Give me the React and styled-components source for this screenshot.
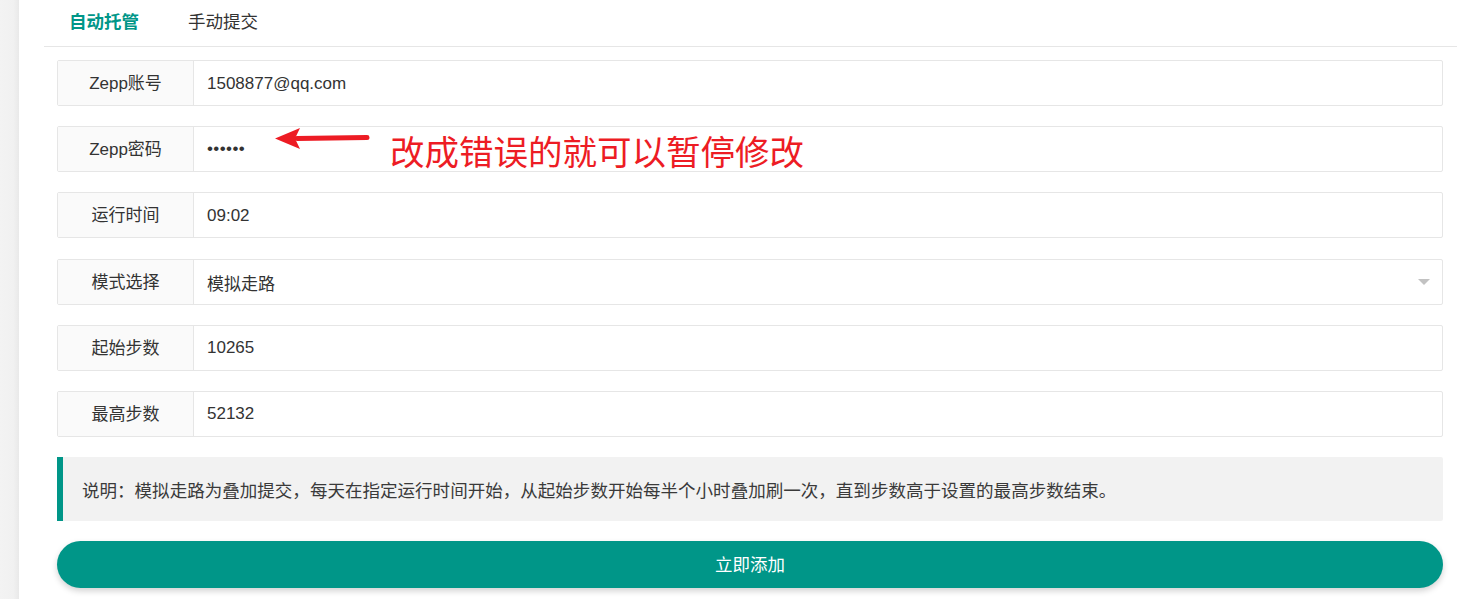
import React from "react";
import styled, { createGlobalStyle } from "styled-components";

const Global = createGlobalStyle`
  html, body {
    margin: 0;
    padding: 0;
    background: #fff;
  }
  body {
    font-family: "Liberation Sans", "Noto Sans CJK SC", sans-serif;
    color: #333;
  }
`;

const Page = styled.div`
  display: flex;
  min-height: 599px;
`;

const Side = styled.div`
  width: 19px;
  flex-shrink: 0;
  background: linear-gradient(90deg, #f3f3f3 0%, #f1f1f1 70%, #e9e9e9 100%);
`;

const Main = styled.div`
  width: 1413px;
  margin-left: 25px;
`;

const Tabs = styled.ul`
  display: flex;
  margin: 0;
  padding: 0;
  list-style: none;
  height: 46px;
  border-bottom: 1px solid #e6e6e6;
`;

const Tab = styled.li`
  padding: 0 25px 0 ${(p) => (p.$first ? "25px" : "24px")};
  line-height: 41px;
  font-size: 17.5px;
  font-family: "Noto Sans CJK SC", sans-serif;
  font-weight: ${(p) => (p.$active ? 700 : 400)};
  color: ${(p) => (p.$active ? "#009688" : "#333")};
`;

const Form = styled.div`
  padding: 13px 14px 0 13px;
  display: flex;
  flex-direction: column;
  gap: 20.2px;
`;

const Row = styled.div`
  position: relative;
  display: flex;
  height: 46px;
  border: 1px solid #e6e6e6;
  border-radius: 2px;
  box-sizing: border-box;
  font-size: 17px;
`;

const Label = styled.div`
  width: 136px;
  flex-shrink: 0;
  display: flex;
  align-items: center;
  justify-content: center;
  padding-bottom: 3px;
  box-sizing: border-box;
  background: #fafafa;
  border-right: 1px solid #e6e6e6;
  color: #333;
`;

const Value = styled.div`
  flex: 1;
  display: flex;
  align-items: center;
  padding-left: 13px;
  padding-top: ${(p) => (p.$dots ? "0" : "1px")};
  color: #333;
  letter-spacing: ${(p) => (p.$dots ? "0.4px" : "0")};
`;

const Caret = styled.span`
  position: absolute;
  right: 12px;
  top: 19px;
  width: 0;
  height: 0;
  border-left: 6px solid transparent;
  border-right: 6px solid transparent;
  border-top: 6px solid #c2c2c2;
`;

const Note = styled.div`
  display: flex;
  align-items: center;
  height: 64px;
  padding-left: 19px;
  background: #f2f2f2;
  border-left: 6px solid #009688;
  border-radius: 0 2px 2px 0;
  font-size: 17.55px;
  font-family: "Noto Sans CJK SC", sans-serif;
  color: #3a3a3a;
`;

const Submit = styled.button`
  height: 47px;
  padding: 0 0 3px;
  border: 0;
  border-radius: 24px;
  background: #009688;
  color: #fff;
  font-family: "Noto Sans CJK SC", sans-serif;
  font-size: 17.5px;
  box-shadow: 0 3px 6px rgba(0, 0, 0, 0.18);
  cursor: pointer;
`;

const Annotation = styled.div`
  position: absolute;
  left: 217px;
  top: 0;
  display: flex;
  align-items: flex-start;
  gap: 19px;
  pointer-events: none;
`;

const AnnoText = styled.span`
  font-family: "Noto Sans CJK SC", sans-serif;
  font-size: 34.5px;
  color: #ed1c24;
  line-height: 46px;
`;

const Arrow = () => (
  <svg width="96" height="24" viewBox="0 0 96 24">
    <path d="M22 11.5 L92 10.5" stroke="#ed1c24" strokeWidth="5" strokeLinecap="round" />
    <path d="M0 11.5 L25 1 L20 11.5 L25 22 Z" fill="#ed1c24" />
  </svg>
);

const fields = [
  { label: "Zepp账号", value: "1508877@qq.com" },
  { label: "Zepp密码", value: "••••••", dots: true, note: true },
  { label: "运行时间", value: "09:02" },
  { label: "模式选择", value: "模拟走路", select: true },
  { label: "起始步数", value: "10265" },
  { label: "最高步数", value: "52132" },
];

export default function App() {
  return (
    <Page>
      <Global />
      <Side />
      <Main>
        <Tabs>
          <Tab $first $active>自动托管</Tab>
          <Tab>手动提交</Tab>
        </Tabs>
        <Form>
          {fields.map((f) => (
            <Row key={f.label}>
              <Label>{f.label}</Label>
              <Value $dots={f.dots}>{f.value}</Value>
              {f.select && <Caret />}
              {f.note && (
                <Annotation>
                  <Arrow />
                  <AnnoText>改成错误的就可以暂停修改</AnnoText>
                </Annotation>
              )}
            </Row>
          ))}
          <Note>说明：模拟走路为叠加提交，每天在指定运行时间开始，从起始步数开始每半个小时叠加刷一次，直到步数高于设置的最高步数结束。</Note>
          <Submit>立即添加</Submit>
        </Form>
      </Main>
    </Page>
  );
}
